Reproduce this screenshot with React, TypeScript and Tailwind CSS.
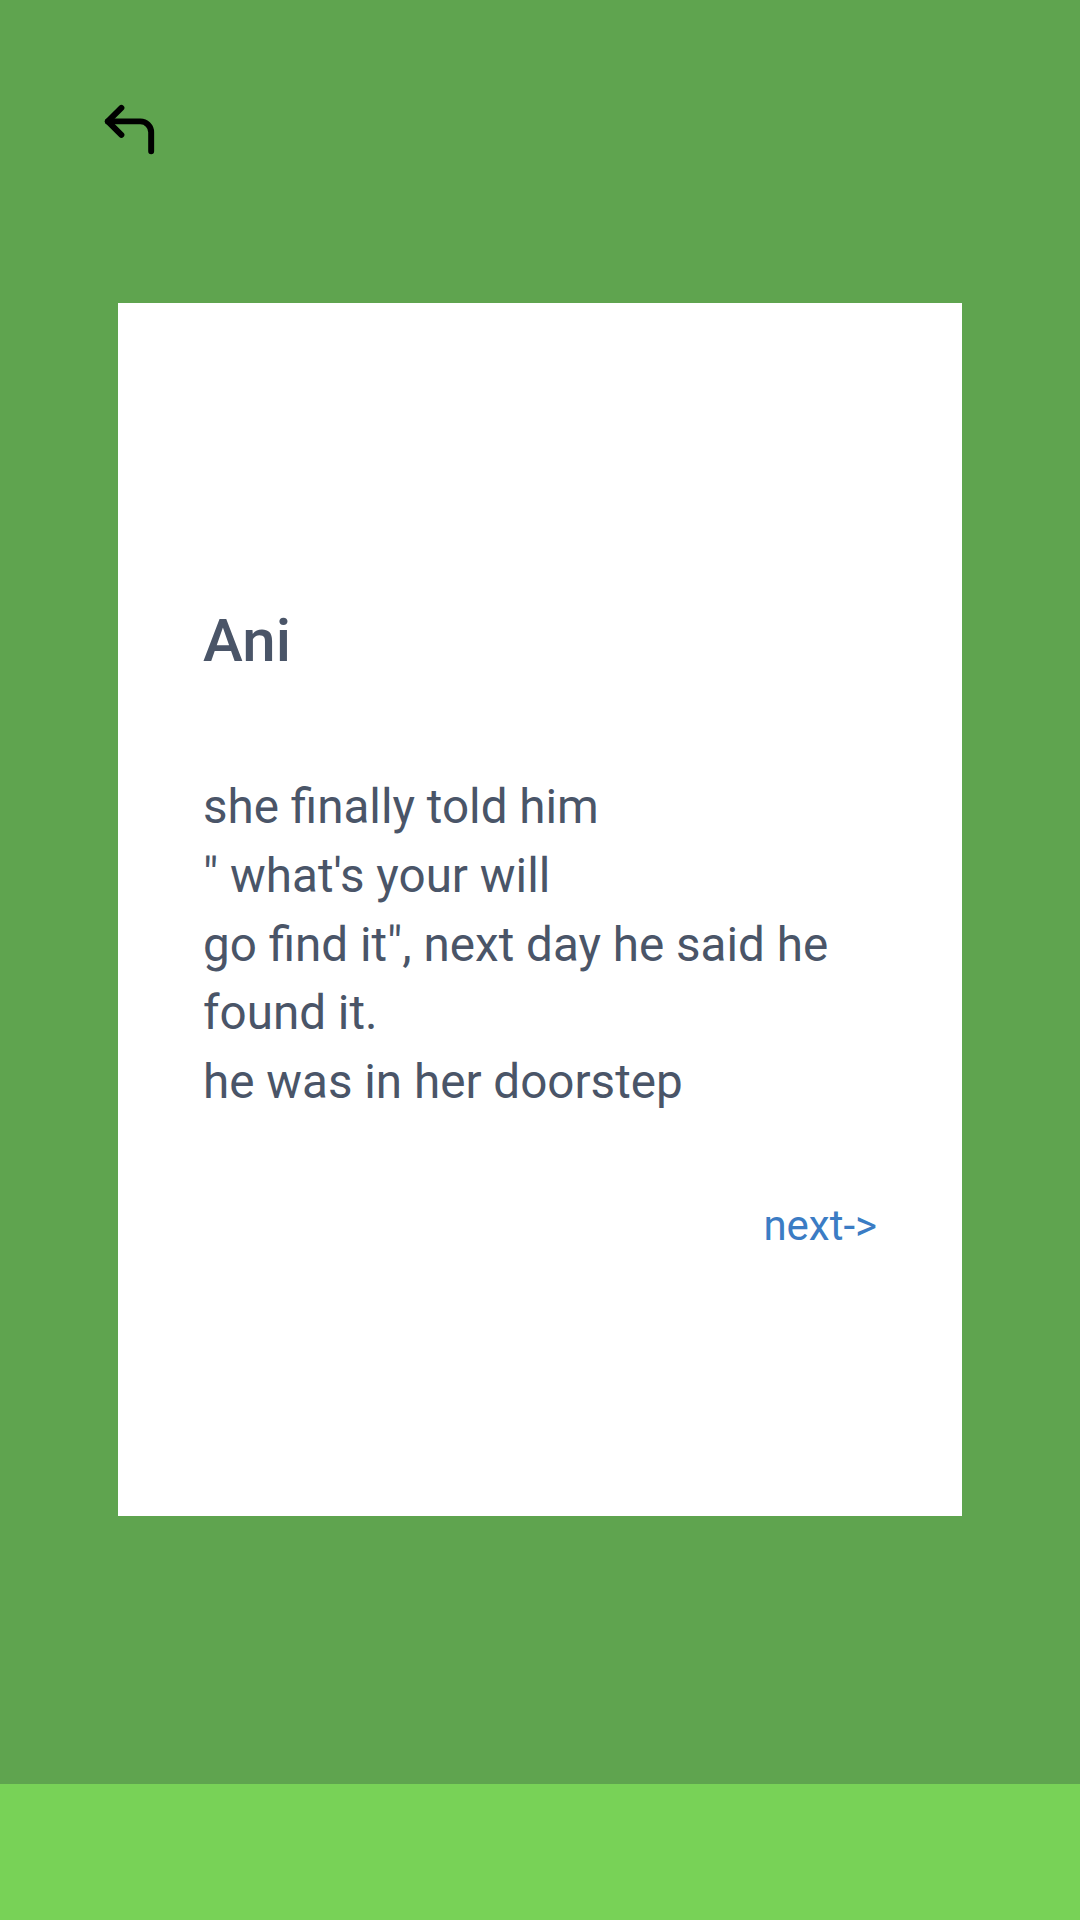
import { CornerUpLeft } from "lucide-react";

const lines = [
  "she finally told him",
  "\" what's your will",
  "go find it\", next day he said he found it.",
  "he was in her doorstep",
];

export default function App() {
  return (
    <div className="flex h-[1920px] w-[1080px] flex-col font-['Roboto',sans-serif]">
      <main className="flex flex-1 flex-col bg-[#5fa44f]">
        <div className="pl-[97px] pt-[97px]">
          <CornerUpLeft size={65} strokeWidth={2.2} className="text-black" />
        </div>
        <section className="mx-auto mt-[141px] flex h-[1213px] w-[844px] flex-col bg-white px-[85px] pt-[302px]">
          <h1 className="text-[60px] font-medium leading-[72px] text-[#4a5568]">Ani</h1>
          <div className="mt-[96px] text-[47.6px] leading-[68.8px] text-[#4a5568]">
            {lines.map((l) => (
              <p key={l}>{l}</p>
            ))}
          </div>
          <div className="mt-[84px] flex justify-end">
            <a href="#" className="text-[42px] leading-[50px] text-[#3b7cc4]">
              next-&gt;
            </a>
          </div>
        </section>
      </main>
      <footer className="h-[136px] bg-[#78d257]" />
    </div>
  );
}
